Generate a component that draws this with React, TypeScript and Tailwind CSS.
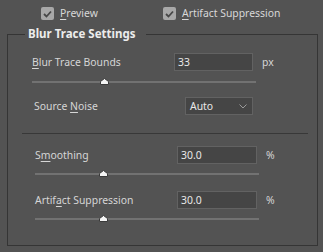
import React from "react";

function Check({ label, mnemonic }: { label: string; mnemonic: number }) {
  return (
    <label className="flex items-center gap-[6px] text-[#d8d8d8]">
      <span className="flex h-[13px] w-[13px] items-center justify-center rounded-[2px] bg-[#a8a8a8]">
        <svg width="9" height="8" viewBox="0 0 9 8">
          <path d="M1 4 L3.5 6.5 L8 1.5" fill="none" stroke="#474747" strokeWidth="1.8" />
        </svg>
      </span>
      <Label text={label} at={mnemonic} />
    </label>
  );
}

function Label({ text, at }: { text: string; at: number }) {
  return (
    <span className="whitespace-nowrap">
      {text.slice(0, at)}
      <u className="underline-offset-2">{text[at]}</u>
      {text.slice(at + 1)}
    </span>
  );
}

function Slider({ pos, width }: { pos: number; width: number }) {
  return (
    <div className="relative h-[2px] bg-[#727272]" style={{ width }}>
      <svg
        className="absolute top-[-3px]"
        style={{ left: pos - 4 }}
        width="9"
        height="7"
        viewBox="0 0 9 7"
      >
        <polygon
          points="0.5,3.5 4.5,0.5 8.5,3.5 8.5,6.5 0.5,6.5"
          fill="#f4f4f4"
          stroke="#3a3a3a"
          strokeWidth="1"
        />
      </svg>
    </div>
  );
}

function Field({ value, width }: { value: string; width: string }) {
  return (
    <div
      className={`flex h-[18px] items-center border border-[#626262] bg-[#454545] pl-[3px] text-[#e8e8e8] ${width}`}
    >
      {value}
    </div>
  );
}

export default function App() {
  return (
    <div
      className="h-[252px] w-[323px] overflow-hidden bg-[#535353] text-[10.4px] leading-none text-[#d6d6d6]"
      style={{ fontFamily: '"Noto Sans", "Liberation Sans", sans-serif' }}
    >
      {/* Options du haut */}
      <div className="flex h-[27px] items-center pl-[41px]">
        <div className="w-[122px]">
          <Check label="Preview" mnemonic={0} />
        </div>
        <Check label="Artifact Suppression" mnemonic={0} />
      </div>

      {/* Groupe */}
      <div className="relative ml-[7px] mt-[7px] h-[212px] w-[311px] border border-[#353535]">
        <span className="absolute left-[17px] top-[-8px] bg-[#535353] pl-[3px] pr-[11px] text-[11.5px] font-bold leading-[14px] text-[#ececec]">
          Blur Trace Settings
        </span>

        <div className="pl-[24px] pt-[18px]">
          <div className="flex h-[18px] items-center">
            <div className="w-[142px]">
              <Label text="Blur Trace Bounds" at={0} />
            </div>
            <Field value="33" width="w-[79px]" />
            <span className="ml-[9px]">px</span>
          </div>
          <div className="mt-[10px]">
            <Slider pos={72} width={224} />
          </div>
          <div className="mt-[14px] flex h-[18px] items-center">
            <div className="w-[153px] pl-[2px]">
              <Label text="Source Noise" at={7} />
            </div>
            <div className="flex h-[18px] w-[68px] items-center justify-between border border-[#626262] bg-[#454545] pl-[4px] pr-[5px] text-[#e8e8e8]">
              Auto
              <svg width="8" height="5" viewBox="0 0 8 5">
                <path d="M0.5 0.5 L4 4 L7.5 0.5" fill="none" stroke="#9a9a9a" strokeWidth="1" />
              </svg>
            </div>
          </div>
        </div>

        <div className="ml-[14px] mr-[9px] mt-[18px] h-px bg-[#383838]" />

        <div className="pl-[27px] pt-[12px]">
          <div className="flex h-[18px] items-center">
            <div className="w-[142px]">
              <Label text="Smoothing" at={1} />
            </div>
            <Field value="30.0" width="w-[80px]" />
            <span className="ml-[9px]">%</span>
          </div>
          <div className="mt-[9px]">
            <Slider pos={68} width={224} />
          </div>
          <div className="mt-[16px] flex h-[18px] items-center">
            <div className="w-[142px]">
              <Label text="Artifact Suppression" at={5} />
            </div>
            <Field value="30.0" width="w-[80px]" />
            <span className="ml-[9px]">%</span>
          </div>
          <div className="mt-[9px]">
            <Slider pos={68} width={224} />
          </div>
        </div>
      </div>
    </div>
  );
}
